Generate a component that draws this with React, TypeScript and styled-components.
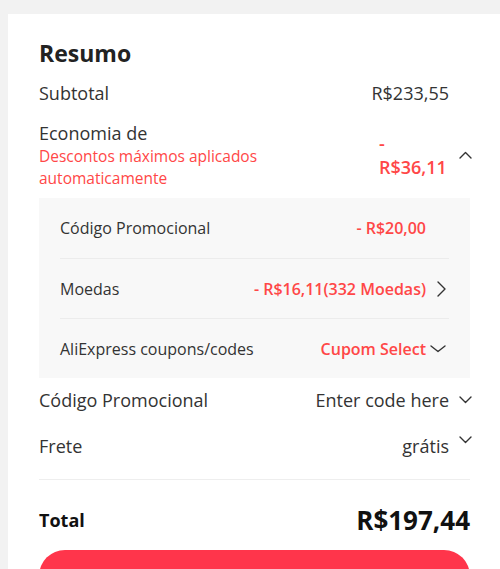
import React from 'react';
import styled, { createGlobalStyle } from 'styled-components';

const GlobalStyle = createGlobalStyle`
  html, body {
    margin: 0;
    padding: 0;
    background: #f2f2f2;
    font-family: 'Open Sans', 'Noto Sans', sans-serif;
    color: #333;
  }
`;

const RED = '#ff4747';

const Card = styled.div`
  margin: 14px 0 0 8px;
  padding: 24px 30px 40px 31px;
  background: #fff;
`;

const Title = styled.h2`
  margin: 0;
  font-size: 23px;
  line-height: 30px;
  font-weight: 700;
  color: #222;
`;

const Row = styled.div<{ $top?: number; $padY?: string }>`
  display: flex;
  align-items: center;
  justify-content: space-between;
  margin-top: ${p => p.$top ?? 0}px;
  padding: ${p => p.$padY ?? '0'};
  font-size: 18px;
  line-height: 24px;
`;

const Label = styled.span`
  color: #333;
`;

const ValueGroup = styled.div`
  display: flex;
  align-items: center;
`;

const Value = styled.span<{ $red?: boolean; $bold?: boolean }>`
  color: ${p => (p.$red ? RED : '#333')};
  font-weight: ${p => (p.$bold ? 600 : 400)};
`;

const IconSlot = styled.span<{ $shift?: number }>`
  display: flex;
  justify-content: flex-end;
  width: 23px;
  margin-right: -2px;
  transform: translateY(${p => p.$shift ?? 0}px);
`;

const EconomyLeft = styled.div`
  display: flex;
  flex-direction: column;
`;

const EconomyNote = styled.span`
  color: ${RED};
  font-size: 15.5px;
  line-height: 22px;
  max-width: 250px;
`;

const EconomyValue = styled.span`
  width: 70px;
  color: ${RED};
  font-weight: 600;
  font-size: 18px;
  line-height: 24px;
  word-break: break-word;
`;

const Panel = styled.div`
  margin-top: 9px;
  padding: 0 21px;
  background: #f8f8f8;
`;

const PanelRow = styled.div`
  display: flex;
  align-items: center;
  justify-content: space-between;
  height: 60px;
  font-size: 16px;
  & + & {
    border-top: 1px solid #ececec;
    height: 59px;
  }
`;

const PanelValue = styled.span`
  color: ${RED};
  font-weight: 600;
  font-size: 16px;
`;

const PanelIcon = styled.span`
  display: flex;
  justify-content: flex-end;
  width: 23px;
  padding-right: 3px;
  box-sizing: border-box;
`;

const Divider = styled.div`
  margin-top: 9px;
  height: 1px;
  background: #eeeeee;
`;

const TotalRow = styled.div`
  display: flex;
  align-items: center;
  justify-content: space-between;
  margin-top: 23px;
`;

const TotalLabel = styled.span`
  font-size: 18px;
  line-height: 24px;
  font-weight: 700;
  color: #111;
`;

const TotalValue = styled.span`
  font-size: 26px;
  line-height: 34px;
  font-weight: 700;
  color: #111;
`;

const OrderButton = styled.button`
  display: block;
  width: 100%;
  height: 56px;
  margin-top: 13px;
  border: none;
  border-radius: 26px;
  background: #ff354b;
`;

const ChevronDown = ({ w = 13 }: { w?: number }) => (
  <svg width={w} height={8} viewBox={`0 0 ${w} 8`} fill="none">
    <polyline
      points={`1,1 ${w / 2},6.5 ${w - 1},1`}
      stroke="#333"
      strokeWidth="1.4"
      strokeLinecap="round"
      strokeLinejoin="round"
    />
  </svg>
);

const ChevronUp = () => (
  <svg width={13} height={8} viewBox="0 0 13 8" fill="none">
    <polyline
      points="1,7 6.5,1.5 12,7"
      stroke="#333"
      strokeWidth="1.4"
      strokeLinecap="round"
      strokeLinejoin="round"
    />
  </svg>
);

const ChevronRight = () => (
  <svg width={9} height={16} viewBox="0 0 9 16" fill="none">
    <polyline
      points="1,1 8,8 1,15"
      stroke="#333"
      strokeWidth="1.4"
      strokeLinecap="round"
      strokeLinejoin="round"
    />
  </svg>
);

const discounts = [
  { label: 'Código Promocional', value: '- R$20,00', icon: null },
  { label: 'Moedas', value: '- R$16,11(332 Moedas)', icon: <ChevronRight /> },
  { label: 'AliExpress coupons/codes', value: 'Cupom Select', icon: <ChevronDown w={16} /> }
];

export default function App() {
  return (
    <>
      <GlobalStyle />
      <Card>
        <Title>Resumo</Title>

        <Row $top={13}>
          <Label>Subtotal</Label>
          <ValueGroup>
            <Value>R$233,55</Value>
            <IconSlot />
          </ValueGroup>
        </Row>

        <Row $top={16}>
          <EconomyLeft>
            <Label>Economia de</Label>
            <EconomyNote>Descontos máximos aplicados automaticamente</EconomyNote>
          </EconomyLeft>
          <ValueGroup>
            <EconomyValue>- R$36,11</EconomyValue>
            <IconSlot>
              <ChevronUp />
            </IconSlot>
          </ValueGroup>
        </Row>

        <Panel>
          {discounts.map(d => (
            <PanelRow key={d.label}>
              <Label>{d.label}</Label>
              <ValueGroup>
                <PanelValue>{d.value}</PanelValue>
                <PanelIcon>{d.icon}</PanelIcon>
              </ValueGroup>
            </PanelRow>
          ))}
        </Panel>

        <Row $padY="10px 0 12px">
          <Label>Código Promocional</Label>
          <ValueGroup>
            <Value>Enter code here</Value>
            <IconSlot>
              <ChevronDown />
            </IconSlot>
          </ValueGroup>
        </Row>

        <Row $padY="10px 0 12px">
          <Label>Frete</Label>
          <ValueGroup>
            <Value>grátis</Value>
            <IconSlot $shift={-6}>
              <ChevronDown />
            </IconSlot>
          </ValueGroup>
        </Row>

        <Divider />

        <TotalRow>
          <TotalLabel>Total</TotalLabel>
          <TotalValue>R$197,44</TotalValue>
        </TotalRow>

        <OrderButton aria-label="Fazer pedido" />
      </Card>
    </>
  );
}
